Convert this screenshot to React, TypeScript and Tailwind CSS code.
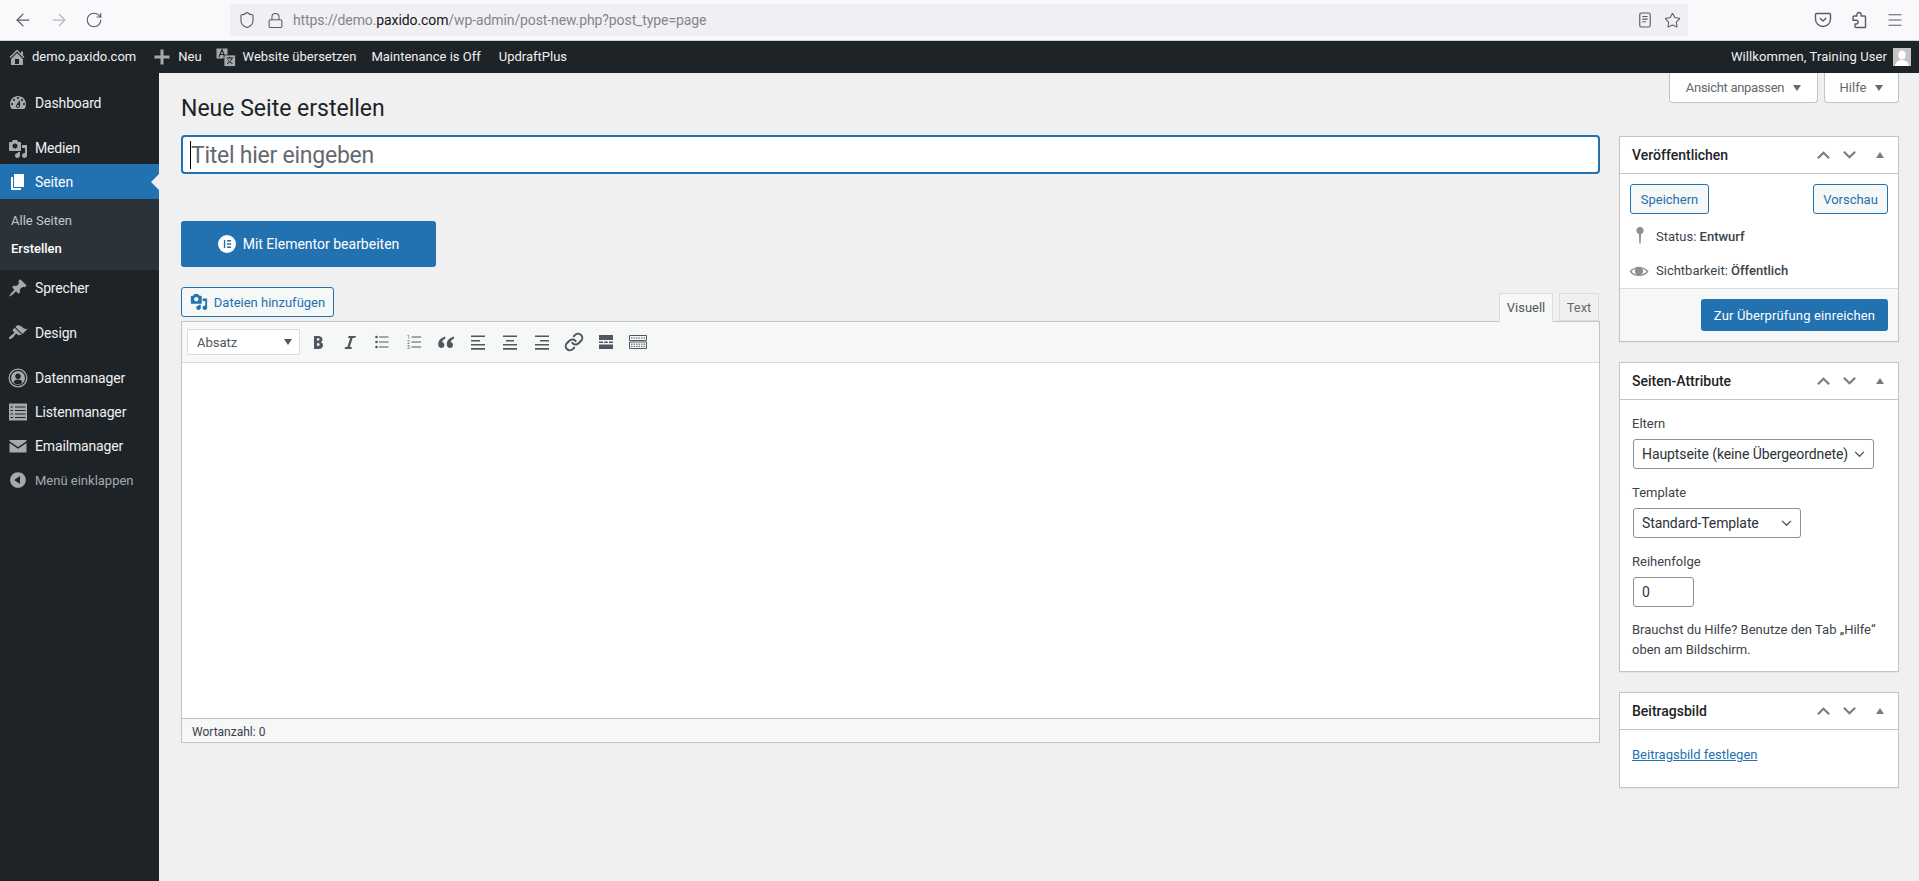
import { ArrowLeft, ArrowRight, RotateCw, Shield, Lock, Star, Menu, Link as LinkIcon } from 'lucide-react';

const dash = {
  home: 'M16 8.5l1.53 1.53-1.06 1.06L10 4.62l-6.47 6.47-1.06-1.06L10 2.5l4 4v-2h2v4zm-6-2.46l6 5.99V18H4v-5.97zM12 17v-5H8v5h4z',
  media: 'M13 11V4c0-.55-.45-1-1-1h-1.67L9 1H5L3.67 3H2c-.55 0-1 .45-1 1v7c0 .55.45 1 1 1h10c.55 0 1-.45 1-1zM7 4.5c1.38 0 2.5 1.12 2.5 2.5S8.38 9.5 7 9.5 4.5 8.38 4.5 7 5.62 4.5 7 4.5zM14 6h5v10.5c0 1.38-1.12 2.5-2.5 2.5S14 17.88 14 16.5s1.12-2.5 2.5-2.5c.17 0 .34.02.5.05V9h-3V6zm-4 8.05V13h2v3.5c0 1.38-1.12 2.5-2.5 2.5S7 17.88 7 16.5 8.12 14 9.5 14c.17 0 .34.02.5.05z',
  page: 'M6 15V2h10v13H6zm-1 1h8v2H3V5h2v11z',
  pin: 'M10.44 3.02l1.82-1.82 6.36 6.35-1.83 1.82c-1.05-.68-2.48-.57-3.41.36l-.75.75c-.92.93-1.04 2.35-.35 3.41l-1.83 1.82-2.41-2.41-2.8 2.79c-.42.42-3.38 2.71-3.8 2.29s1.86-3.39 2.28-3.81l2.79-2.79L4.1 9.36l1.83-1.82c1.05.69 2.48.57 3.4-.36l.75-.75c.93-.92 1.05-2.35.36-3.41z',
  brush: 'M14.48 11.06L7.41 3.99l1.5-1.5c.5-.56 2.3-.47 3.51.32 1.21.8 1.43 1.28 2.91 2.1 1.18.64 2.45 1.26 4.45.85zm-.71.71L6.7 4.7 4.93 6.47c-.39.39-.39 1.02 0 1.41l1.06 1.06c.39.39.39 1.03 0 1.42-.6.6-1.43 1.11-2.21 1.69-.35.26-.7.53-1.01.84C1.43 13.23.4 14.98 1.2 15.8c.8.8 2.55-.22 3.91-1.57.31-.31.58-.66.84-1.01.58-.78 1.09-1.61 1.69-2.21.39-.39 1.02-.39 1.41 0l1.06 1.06c.39.39 1.02.39 1.41 0z',
  dashboard: 'M3.76 16h12.48c1.1-1.37 1.76-3.11 1.76-5 0-4.42-3.58-8-8-8s-8 3.58-8 8c0 1.89.66 3.63 1.76 5zM10 4c.55 0 1 .45 1 1s-.45 1-1 1-1-.45-1-1 .45-1 1-1zM6 6c.55 0 1 .45 1 1s-.45 1-1 1-1-.45-1-1 .45-1 1-1zm8 0c.55 0 1 .45 1 1s-.45 1-1 1-1-.45-1-1 .45-1 1-1zm-5.37 5.55L12 7v6c0 1.1-.9 2-2 2s-2-.9-2-2c0-.57.24-1.08.63-1.45zM4 10c.55 0 1 .45 1 1s-.45 1-1 1-1-.45-1-1 .45-1 1-1zm12 0c.55 0 1 .45 1 1s-.45 1-1 1-1-.45-1-1 .45-1 1-1zm-5 3c0-.55-.45-1-1-1s-1 .45-1 1 .45 1 1 1 1-.45 1-1z',
  collapse: 'M10 2.16c4.33 0 7.84 3.51 7.84 7.84s-3.51 7.84-7.84 7.84S2.16 14.33 2.16 10 5.71 2.16 10 2.16zm2 11.72V6.12L6.18 9.97z',
  plus: 'M17.500 8.500v3h-6v6h-3v-6h-6v-3h6v-6h3v6z',
  people: 'M10 0.500a9.500 9.500 0 100 19 9.500 9.500 0 000-19zm0 1.300a8.200 8.200 0 110 16.400 8.200 8.200 0 010-16.400zM10 3a7 7 0 100 14 7 7 0 000-14zm0 2.500a2.700 2.700 0 110 5.400 2.700 2.700 0 010-5.400zm-4.300 9c.2-2 1.800-3 4.300-3s4.100 1 4.300 3a5.800 5.800 0 01-8.600 0z',
  email: 'M1.500 4h17v1.200L10 11 1.500 5.200zm0 3l8.500 5.800L18.500 7v9.500h-17z',
  keyPin: 'M10 1a3.600 3.600 0 00-1 7.060L9.300 17.500h1.400L11 8.060A3.600 3.600 0 0010 1z',
};

function Dash({ d, className }: { d: string; className?: string }) {
  return (
    <svg viewBox="0 0 20 20" className={className} fill="currentColor" fillRule="evenodd">
      <path d={d} />
    </svg>
  );
}

function ListIcon() {
  return (
    <svg viewBox="0 0 20 20" className="w-5 h-5 text-[#a7aaad]" fill="none">
      <rect x="1" y="1.500" width="18" height="17" fill="currentColor" />
      <path d="M2.500 5h15M2.500 8.500h15M2.500 12h15M2.500 15.500h15" stroke="#1d2327" strokeWidth="1" />
      <path d="M5.500 3v14" stroke="#a7aaad" strokeWidth="1" />
      <path d="M6.500 3v14" stroke="#a7aaad" strokeWidth="1" />
    </svg>
  );
}

function TranslateIcon() {
  return (
    <svg viewBox="0 0 20 20" className="w-5 h-5 text-[#a7aaad]" fill="none">
      <path d="M0.500 1.500h11v10h-11z" fill="currentColor" />
      <path d="M3 10l3-7.500 3 7.500M4.200 7.500h3.600" stroke="#1d2327" strokeWidth="1.100" />
      <path d="M8 8h11.500v11.500H8z" fill="currentColor" stroke="#1d2327" strokeWidth="0.800" />
      <path d="M10.500 11h6.500M13.700 9.800v1.500M16 11c-.6 2.600-2.400 4.600-5 5.500M11.800 12.500c.8 1.800 2.300 3.200 4.700 4" stroke="#1d2327" strokeWidth="1" />
    </svg>
  );
}

function SideItem({ d, icon, label, className, dim }: { d?: string; icon?: React.ReactNode; label: string; className?: string; dim?: boolean }) {
  return (
    <div className={`flex items-center h-[34px] ${className ?? ''}`}>
      <div className="w-[35px] flex justify-center shrink-0">
        {icon ?? <Dash d={d ?? ''} className="w-5 h-5 text-[#a7aaad]" />}
      </div>
      <span className={dim ? 'text-[13px] pt-px text-[#a7aaad]' : 'text-[14px] tracking-[-0.15px] text-[#f0f0f1]'}>{label}</span>
    </div>
  );
}

function Sidebar() {
  return (
    <aside className="w-[159px] shrink-0 bg-[#1d2327] pt-[13px]">
      <SideItem d={dash.dashboard} label="Dashboard" />
      <div className="mt-[11px] h-[33px] pt-px">
        <SideItem d={dash.media} label="Medien" className="!h-[33px]" />
      </div>
      <div className="relative flex items-center h-[35px] pt-px bg-[#2271b1]">
        <div className="w-[35px] flex justify-center shrink-0">
          <Dash d={dash.page} className="w-5 h-5 text-white" />
        </div>
        <span className="text-[14px] tracking-[-0.15px] text-white">Seiten</span>
        {/* notch pointing at the content */}
        <div className="absolute right-0 top-[10px] border-y-[8px] border-r-[8px] border-y-transparent border-r-[#f0f0f1]" />
      </div>
      <div className="bg-[#2c3338] pt-[8px] pb-[7px] pl-[11px] text-[13px]">
        <div className="h-[28px] flex items-center text-[#c3c9ce]">Alle Seiten</div>
        <div className="h-[28px] flex items-center text-white font-medium">Erstellen</div>
      </div>
      <SideItem d={dash.pin} label="Sprecher" className="mt-px" />
      <SideItem d={dash.brush} label="Design" className="mt-[11px]" />
      <SideItem d={dash.people} label="Datenmanager" className="mt-[11px]" />
      <SideItem icon={<ListIcon />} label="Listenmanager" />
      <SideItem d={dash.email} label="Emailmanager" />
      <SideItem d={dash.collapse} label="Menü einklappen" dim />
    </aside>
  );
}

function BrowserBar() {
  return (
    <div className="h-[41px] shrink-0 bg-[#f9f9fb] border-b border-[#cfcfd8] flex items-center text-[#5b5b66]">
      <div className="flex items-center pl-[13px] gap-[16px] w-[230px]">
        <ArrowLeft className="w-5 h-5" strokeWidth={1.5} />
        <ArrowRight className="w-5 h-5 text-[#b4b4bb]" strokeWidth={1.5} />
        <RotateCw className="w-[18px] h-[18px]" strokeWidth={1.5} />
      </div>
      <div className="w-[1458px] h-8 rounded bg-[#f0f0f4] flex items-center pl-[8px] pr-[7px]">
        <Shield className="w-[18px] h-[18px]" strokeWidth={1.5} />
        <Lock className="w-[17px] h-[17px] ml-[11px]" strokeWidth={1.5} />
        <span className="ml-[9px] text-[14px] tracking-[-0.1px] text-[#84848e]">
          https://demo.<span className="text-[#15141a]">paxido.com</span>/wp-admin/post-new.php?post_type=page
        </span>
        <div className="ml-auto flex items-center gap-[12px]">
          <svg viewBox="0 0 16 18" className="w-[14px] h-[16px]" fill="none" stroke="currentColor" strokeWidth="1.300">
            <rect x="2" y="1" width="12" height="16" rx="2" />
            <path d="M5 5h6M5 8h6M5 11h4" />
          </svg>
          <Star className="w-[17px] h-[17px]" strokeWidth={1.5} />
        </div>
      </div>
      <div className="flex-1 flex items-center justify-end pr-[15px] gap-[18px]">
        <svg viewBox="0 0 18 18" className="w-[18px] h-[18px]" fill="none" stroke="currentColor" strokeWidth="1.400">
          <path d="M2.500 2.500h13a1 1 0 011 1V8a7.500 7.500 0 01-15 0V3.500a1 1 0 011-1z" />
          <path d="M5.800 7l3.200 3 3.200-3" />
        </svg>
        <svg viewBox="0 0 18 18" className="w-[18px] h-[18px]" fill="none" stroke="currentColor" strokeWidth="1.400" strokeLinejoin="round">
          <path d="M9 1.500c1.300 0 2.100.9 2.100 2V5h3.400a1 1 0 011 1v10.500H6a1 1 0 01-1-1V13h1.200a1.900 1.900 0 000-3.800H3V6a1 1 0 011-1h3V3.500c0-1.100.8-2 2-2z" />
        </svg>
        <Menu className="w-[18px] h-[18px]" strokeWidth={1.5} />
      </div>
    </div>
  );
}

function AdminBar() {
  return (
    <div className="h-8 shrink-0 bg-[#1d2327] flex items-center text-[13px] text-[#f0f0f1] pl-[7px] pr-[8px]">
      <Dash d={dash.home} className="w-[20px] h-[20px] text-[#a7aaad]" />
      <span className="ml-[5px]">demo.paxido.com</span>
      <Dash d={dash.plus} className="w-[20px] h-[20px] text-[#a7aaad] ml-[16px]" />
      <span className="ml-[6px]">Neu</span>
      <div className="ml-[14px]"><TranslateIcon /></div>
      <span className="ml-[7px]">Website übersetzen</span>
      <span className="ml-[15px]">Maintenance is Off</span>
      <span className="ml-[18px]">UpdraftPlus</span>
      <span className="ml-auto tracking-[0.1px]">Willkommen, Training User</span>
      <div className="ml-[6px] w-[18px] h-[18px] bg-[#c4c4c4] overflow-hidden">
        <svg viewBox="0 0 18 18" className="w-full h-full" fill="#fff">
          <ellipse cx="9" cy="7" rx="3.600" ry="4.500" />
          <path d="M2 18c.5-4 3.500-6 7-6s6.500 2 7 6z" />
        </svg>
      </div>
    </div>
  );
}

function BoxControls() {
  return (
    <div className="flex items-center text-[#787c82]">
      <svg viewBox="0 0 16 10" className="w-[15px] h-[10px]" fill="none" stroke="currentColor" strokeWidth="2.200"><path d="M2 8.500l6-6 6 6" /></svg>
      <svg viewBox="0 0 16 10" className="w-[15px] h-[10px] ml-[11px]" fill="none" stroke="currentColor" strokeWidth="2.200"><path d="M2 1.500l6 6 6-6" /></svg>
      <div className="ml-[19px] mr-[14px] border-x-[4px] border-b-[6px] border-x-transparent border-b-[#787c82]" />
    </div>
  );
}

function Box({ title, children, className }: { title: string; children: React.ReactNode; className?: string }) {
  return (
    <section className={`bg-white border border-[#c3c4c7] shadow-[0_1px_1px_rgba(0,0,0,0.04)] ${className ?? ''}`}>
      <div className="h-[37px] flex items-center justify-between border-b border-[#c3c4c7] pl-3">
        <h2 className="text-[14px] pt-px font-medium text-[#1d2327]">{title}</h2>
        <BoxControls />
      </div>
      {children}
    </section>
  );
}

function FakeSelect({ label, className }: { label: string; className: string }) {
  return (
    <div className={`h-[30px] flex items-center justify-between border border-[#8c8f94] rounded-[3px] bg-white pl-2 pr-[8px] text-[14px] tracking-[-0.1px] text-[#2c3338] ${className}`}>
      <span>{label}</span>
      <svg viewBox="0 0 12 8" className="w-[11px] h-[7px]" fill="none" stroke="#50575e" strokeWidth="1.600"><path d="M1 1l5 5 5-5" /></svg>
    </div>
  );
}

function Toolbar() {
  const ink = 'w-5 h-5 text-[#50575e]';
  return (
    <div className="h-[41px] bg-[#f6f7f7] border-b border-[#dcdcde] flex items-center pl-[5px]">
      <div className="w-[113px] h-[26px] bg-white border border-[#dcdcde] flex items-center justify-between pl-[9px] pr-[7px] text-[13px] text-[#50575e]">
        <span className="pt-px">Absatz</span>
        <div className="border-x-[4.500px] border-t-[6px] border-x-transparent border-t-[#50575e]" />
      </div>
      <div className="ml-[8px] flex items-center gap-[12px]">
        <svg viewBox="0 0 20 20" className={ink} fill="currentColor" fillRule="evenodd"><path d="M6 4v13h4.540c1.370 0 2.460-.33 3.260-1 .8-.66 1.200-1.580 1.200-2.770 0-.84-.17-1.510-.51-2.010s-.9-.85-1.690-1.050v-.06c.48-.14.87-.43 1.170-.87.31-.44.46-.98.46-1.630 0-1.150-.37-1.980-1.100-2.500S11.340 4 9.970 4H6zm2.980 5.010V6.320h.9c.57 0 .99.08 1.250.24.26.16.39.43.39.81 0 .41-.13.7-.4.88-.27.17-.68.26-1.240.26h-.9zm0 2.190h1.050c.58 0 1 .1 1.270.31.27.2.4.52.4.94 0 .47-.14.81-.41 1.030-.27.22-.7.33-1.280.33H8.980v-2.610z" /></svg>
        <svg viewBox="0 0 20 20" className={ink} fill="currentColor"><path d="M14.780 6h-2.130l-2.800 9h2.120l-.62 2H4.600l.62-2h2.140l2.800-9H8.030l.62-2h7.750z" /></svg>
        <svg viewBox="0 0 20 20" className={ink} fill="currentColor"><path d="M7 4.500h9.500v1H7zM7 9.500h9.500v1H7zM7 14.500h9.500v1H7z" /><circle cx="4.500" cy="5" r="1.300" /><circle cx="4.500" cy="10" r="1.300" /><circle cx="4.500" cy="15" r="1.300" /></svg>
        <svg viewBox="0 0 20 20" className={ink} fill="currentColor">
          <path d="M7.500 4.500h9.500v1H7.500zM7.500 9.500h9.500v1H7.500zM7.500 14.500h9.500v1H7.500z" />
          <text x="3" y="7" fontSize="5" fontFamily="Roboto">1</text>
          <text x="3" y="12" fontSize="5" fontFamily="Roboto">2</text>
          <text x="3" y="17" fontSize="5" fontFamily="Roboto">3</text>
        </svg>
        <svg viewBox="0 0 20 20" className={ink} fill="currentColor"><path d="M9.200 4.500C6.100 5.400 2.200 7.800 2.200 12.300c0 2.200 1.300 3.700 3.200 3.700 1.700 0 3-1.300 3-3 0-1.600-1.100-2.700-2.500-2.900.3-1.400 1.700-2.900 3.500-3.700zM17.800 4.500c-3.100.9-7 3.300-7 7.800 0 2.200 1.300 3.700 3.200 3.700 1.700 0 3-1.300 3-3 0-1.600-1.100-2.700-2.500-2.900.3-1.400 1.700-2.900 3.500-3.700z" /></svg>
        <svg viewBox="0 0 20 20" className={ink} fill="currentColor"><path d="M3 3.500h14v1.500H3zM3 8h9v1.500H3zM3 12h14v1.500H3zM3 16h14v1.800H3z" /></svg>
        <svg viewBox="0 0 20 20" className={ink} fill="currentColor"><path d="M3 3.500h14v1.500H3zM6 8h8v1.500H6zM3 12h14v1.500H3zM3 16h14v1.800H3z" /></svg>
        <svg viewBox="0 0 20 20" className={ink} fill="currentColor"><path d="M3 3.500h14v1.500H3zM8 8h9v1.500H8zM3 12h14v1.500H3zM3 16h14v1.800H3z" /></svg>
        <LinkIcon className={ink} strokeWidth={2.400} />
        <svg viewBox="0 0 20 20" className={ink} fill="currentColor"><path d="M3 3h14v5H3zM3 9.500h4v1.500H3zM8.200 9.500h3.600v1.500H8.200zM13 9.500h4v1.500h-4zM3 12.500h14V17H3z" /></svg>
        <svg viewBox="0 0 20 20" className={ink} fill="none" stroke="currentColor" strokeWidth="1"><path d="M1.500 3.500h17v5h-17zM1.500 10h17v6.500h-17z" /><path d="M3 6h14M3 12.200h14M3 14.400h14" strokeDasharray="1.500 1" /></svg>
      </div>
    </div>
  );
}

function Editor() {
  return (
    <>
      <div className="flex justify-between h-[34px]">
        <button className="h-[30px] w-[153px] flex items-center justify-center gap-[6px] border border-[#2271b1] rounded-[3px] bg-[#f6f7f7] text-[13px] text-[#2271b1]">
          <Dash d={dash.media} className="w-[18px] h-[18px]" />
          <span className="pt-px">Dateien hinzufügen</span>
        </button>
        <div className="self-end flex gap-[6px] pr-px relative -mb-px">
          <div className="h-[29px] w-[54px] pt-px flex items-center justify-center bg-[#f6f7f7] border border-[#dcdcde] border-b-[#f6f7f7] text-[13px] text-[#50575e]">Visuell</div>
          <div className="h-[28px] w-[40px] pt-px flex items-center justify-center bg-[#f0f0f1] border border-[#dcdcde] text-[13px] text-[#646970]">Text</div>
        </div>
      </div>
      <div className="border border-[#c3c4c7] bg-white">
        <Toolbar />
        <div className="h-[355px]" />
        <div className="h-[24px] bg-[#f6f7f7] border-t border-[#c3c4c7] flex items-center pl-[10px] pt-[2px] text-[12px] text-[#3c434a]">
          Wortanzahl: 0
        </div>
      </div>
    </>
  );
}

function RightColumn() {
  return (
    <div className="w-[280px] shrink-0 mt-px text-[13px] text-[#3c434a]">
      <Box title="Veröffentlichen">
        <div className="px-[10px] pt-[10px] h-[114px]">
          <div className="flex justify-between">
            <button className="h-[30px] w-[79px] pt-px border border-[#2271b1] rounded-[3px] bg-[#f6f7f7] text-[#2271b1]">Speichern</button>
            <button className="h-[30px] w-[75px] pt-px border border-[#2271b1] rounded-[3px] bg-[#f6f7f7] text-[#2271b1]">Vorschau</button>
          </div>
          <div className="flex items-center h-[20px] mt-[13px]">
            <div className="w-[26px] flex justify-center -ml-[3px] mr-[3px]"><Dash d={dash.keyPin} className="w-5 h-5 text-[#8c8f94] -mt-[2px]" /></div>
            Status:&nbsp;<span className="font-medium">Entwurf</span>
          </div>
          <div className="flex items-center h-[20px] mt-[14px]">
            <div className="w-[26px] flex justify-center -ml-[4px] mr-[4px]">
              <svg viewBox="0 0 20 20" className="w-5 h-5">
                <path d="M0.500 10.500C4.500 4.500 15.500 4.500 19.500 10.500 15.500 16.500 4.500 16.500 0.500 10.500z" fill="#8c8f94" />
                <path d="M2.500 10.500C6 6.300 14 6.300 17.500 10.500 14 14.700 6 14.700 2.500 10.500z" fill="#fff" />
                <circle cx="10" cy="10" r="4.200" fill="#8c8f94" />
              </svg>
            </div>
            Sichtbarkeit:&nbsp;<span className="font-medium">Öffentlich</span>
          </div>
        </div>
        <div className="h-[53px] bg-[#f6f7f7] border-t border-[#dcdcde] flex justify-end pt-[10px] pr-[10px]">
          <button className="h-[32px] w-[187px] pt-px rounded-[3px] bg-[#2271b1] text-white text-[13px] tracking-[0.15px]">Zur Überprüfung einreichen</button>
        </div>
      </Box>
      <Box title="Seiten-Attribute" className="mt-[20px]">
        <div className="px-3 pt-[15px] pb-[11px]">
          <p className="leading-[18px]">Eltern</p>
          <FakeSelect label="Hauptseite (keine Übergeordnete)" className="w-[241px] ml-px mt-[6px]" />
          <p className="leading-[18px] mt-[15px]">Template</p>
          <FakeSelect label="Standard-Template" className="w-[168px] ml-px mt-[6px]" />
          <p className="leading-[18px] mt-[15px]">Reihenfolge</p>
          <div className="w-[61px] h-[30px] ml-px mt-[6px] border border-[#8c8f94] rounded-[3px] bg-white pl-2 flex items-center text-[14px] text-[#2c3338]">0</div>
          <p className="mt-[13px] leading-[20px]">Brauchst du Hilfe? Benutze den Tab „Hilfe“ oben am Bildschirm.</p>
        </div>
      </Box>
      <Box title="Beitragsbild" className="mt-[20px] h-[96px]">
        <div className="px-3 pt-[15px]">
          <a className="text-[#2271b1] underline leading-[20px]">Beitragsbild festlegen</a>
        </div>
      </Box>
    </div>
  );
}

export default function App() {
  return (
    <div className="h-[881px] overflow-hidden flex flex-col bg-[#f0f0f1] font-['Roboto',sans-serif]">
      <BrowserBar />
      <AdminBar />
      <div className="flex flex-1 min-h-0">
        <Sidebar />
        <main className="flex-1 pl-[22px] pr-[20px]">
          <div className="float-right flex gap-[6px]">
            <div className="h-[30px] w-[149px] flex items-center justify-center gap-[6px] bg-white border border-t-0 border-[#c3c4c7] rounded-b text-[13px] tracking-[-0.3px] text-[#646970]">
              Ansicht anpassen
              <div className="ml-[3px] border-x-[4px] border-t-[6px] border-x-transparent border-t-[#646970]" />
            </div>
            <div className="h-[30px] w-[75px] flex items-center justify-center gap-[6px] bg-white border border-t-0 border-[#c3c4c7] rounded-b text-[13px] text-[#646970]">
              Hilfe
              <div className="ml-[3px] border-x-[4px] border-t-[6px] border-x-transparent border-t-[#646970]" />
            </div>
          </div>
          <h1 className="pt-[21px] text-[23px] leading-[29px] text-[#1d2327] mb-[12px]">Neue Seite erstellen</h1>
          <div className="flex gap-[19px]">
            <div className="flex-1 min-w-0">
              <div className="h-[39px] bg-white border-2 border-[#2271b1] rounded flex items-center pl-[7px] text-[23px] tracking-[-0.25px] text-[#646970]">
                <span className="w-px h-[28px] bg-black" />
                <span className="pt-[3px]">Titel hier eingeben</span>
              </div>
              <button className="mt-[47px] h-[46px] w-[255px] bg-[#2271b1] rounded-[3px] flex items-center justify-center gap-[7px] text-[14px] text-white">
                <svg viewBox="0 0 20 20" className="w-[18px] h-[18px]">
                  <circle cx="10" cy="10" r="10" fill="#fff" />
                  <path d="M6.500 5.500h1.600v9H6.500zM10 5.500h4.500v1.600H10zM10 9.200h4.500v1.600H10zM10 12.900h4.500v1.600H10z" fill="#2271b1" />
                </svg>
                <span className="pt-px">Mit Elementor bearbeiten</span>
              </button>
              <div className="mt-[20px]"><Editor /></div>
            </div>
            <RightColumn />
          </div>
        </main>
      </div>
    </div>
  );
}
